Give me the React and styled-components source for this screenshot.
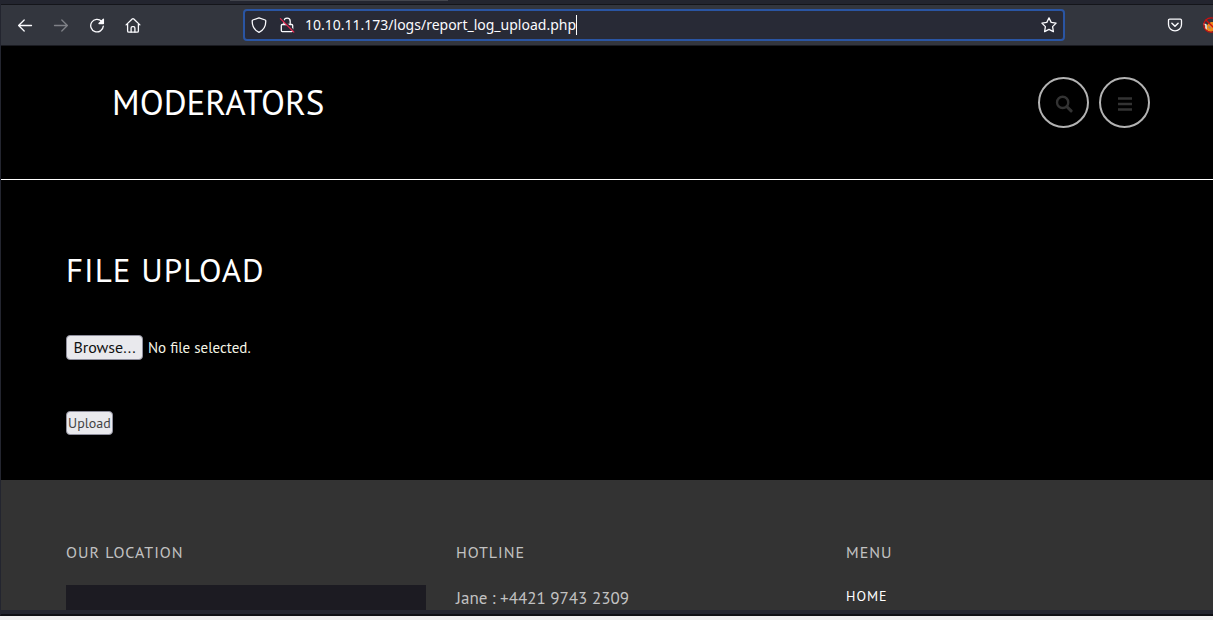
import React, { useRef, useState } from "react";
import styled, { createGlobalStyle } from "styled-components";

const GlobalStyle = createGlobalStyle`
  * {
    box-sizing: border-box;
  }
  body {
    margin: 0;
    background: #f0f0f0;
    font-family: "PT Sans", Lato, "Noto Sans", sans-serif;
  }
  button, input {
    font-family: inherit;
  }
`;

const Desktop = styled.div`
  display: flex;
  flex-direction: column;
  height: 100vh;
  padding-bottom: 4px;
`;

const BrowserWindow = styled.div`
  display: flex;
  flex-direction: column;
  flex: 1;
  min-height: 0;
  padding-bottom: 4px;
  overflow: hidden;
  background: #23252f;
  border-left: 1px solid #23252f;
  border-bottom: 2px solid #0e0f14;
`;

const TabStrip = styled.div`
  flex: none;
  height: 5px;
  padding-left: 229px;
  border-bottom: 1px solid #14151a;
`;

const TabEdge = styled.div`
  width: 218px;
  height: 1px;
  background: #43454d;
`;

const Toolbar = styled.div`
  display: flex;
  flex: none;
  align-items: center;
  justify-content: space-between;
  height: 41px;
  padding-left: 6px;
  background: #33363e;
  border-bottom: 1px solid #1a1b21;
`;

const ToolGroup = styled.div`
  display: flex;
  flex: none;
  overflow: hidden;
`;

const LeftTools = styled(ToolGroup)`
  width: 236px;
`;

const RightTools = styled(ToolGroup)`
  width: 148px;
  padding-left: 92px;
`;

const ToolButton = styled.button`
  display: flex;
  flex: none;
  align-items: center;
  justify-content: center;
  width: 36px;
  height: 32px;
  padding: 0;
  color: #fbfbfe;
  background: none;
  border: none;

  &:disabled {
    color: #7f8187;
  }
`;

const AddressBar = styled.div`
  display: flex;
  flex: 1;
  align-items: center;
  height: 32px;
  background: #282a36;
  border: 2px solid #2a55a3;
  border-radius: 4px;
`;

const AddressButton = styled(ToolButton)`
  width: 28px;
  height: 28px;
`;

const AddressInput = styled.input`
  field-sizing: content;
  margin-left: 4px;
  padding: 0;
  color: #fbfbfe;
  font-family: "Noto Sans", sans-serif;
  font-size: 14px;
  line-height: 20px;
  caret-color: transparent;
  background: none;
  border: none;
  outline: none;
`;

const Caret = styled.span`
  width: 1px;
  height: 20px;
  margin-right: auto;
  background: #ffffff;
`;

const Page = styled.div`
  display: flex;
  flex: 1;
  flex-direction: column;
  min-height: 0;
  overflow: hidden;
  background: #000000;
`;

const Header = styled.header`
  display: flex;
  flex: none;
  align-items: center;
  justify-content: space-between;
  padding: 31px 63px 51px 111px;
  border-bottom: 1px solid #ffffff;
`;

const Brand = styled.a`
  color: #ffffff;
  font-size: 35px;
  line-height: 51px;
  text-decoration: none;
`;

const HeaderActions = styled.nav`
  display: flex;
  gap: 10px;
`;

const RoundButton = styled.button`
  display: flex;
  align-items: center;
  justify-content: center;
  width: 51px;
  height: 51px;
  padding: 2px 0 0;
  color: #333333;
  background: none;
  border: 2px solid #b3b3b3;
  border-radius: 50%;
`;

const Main = styled.main`
  flex: none;
  padding: 70px 65px 45px;
`;

const Title = styled.h1`
  margin: 0 0 45px;
  color: #ffffff;
  font-size: 33px;
  font-weight: 400;
  line-height: 40px;
  letter-spacing: 1px;
  text-transform: uppercase;
`;

const FileRow = styled.div`
  display: flex;
  align-items: center;
  gap: 5px;
  margin-bottom: 51px;
  color: #f5f5e6;
  font-size: 15px;
`;

const GreyButton = styled.button`
  padding: 0 1px;
  color: #444444;
  font-size: 14px;
  line-height: 22px;
  background: #e9e9ed;
  border: 1px solid #8f8f9d;
  border-radius: 4px;
`;

const BrowseButton = styled(GreyButton)`
  min-width: 77px;
  padding: 0 5px;
  color: #111111;
  font-size: 16px;
  line-height: 23px;
`;

const Footer = styled.footer`
  display: grid;
  flex: 1 0 auto;
  grid-template-columns: repeat(3, 1fr);
  gap: 30px;
  padding: 62px 7px 0 65px;
  color: #c2c2c2;
  background: #333333;
`;

const FooterTitle = styled.h2`
  margin: 0 0 22px;
  font-size: 16px;
  font-weight: 400;
  line-height: 21px;
  letter-spacing: 1px;
  text-transform: uppercase;
`;

const MapBox = styled.div`
  height: 200px;
  background: #1c1b22;
`;

const Phone = styled.p`
  margin: 0;
  font-size: 17px;
  line-height: 26px;
`;

const MenuLink = styled.a`
  display: block;
  color: #ffffff;
  font-size: 14px;
  line-height: 22px;
  letter-spacing: 1px;
  text-decoration: none;
  text-transform: uppercase;
`;

const Icon = ({ size = 16, children }) => (
  <svg
    width={size}
    height={size}
    viewBox="0 0 16 16"
    fill="none"
    stroke="currentColor"
    strokeWidth="1.3"
    strokeLinecap="round"
    strokeLinejoin="round"
    aria-hidden="true"
  >
    {children}
  </svg>
);

const BackIcon = () => (
  <Icon>
    <path d="M14.5 8.5H1.6M7.2 3L1.6 8.5L7.2 14" />
  </Icon>
);

const ForwardIcon = () => (
  <Icon>
    <path d="M1.5 8.5H14.4M8.8 3L14.4 8.5L8.8 14" />
  </Icon>
);

const ReloadIcon = () => (
  <Icon>
    <path d="M12.6 4.3A6.3 6.3 0 1 0 14.3 9.1" />
    <path d="M14.4 2.1V6.5H10Z" fill="currentColor" />
  </Icon>
);

const HomeIcon = () => (
  <Icon>
    <path d="M1.1 7.9L7.2 2Q8 1.3 8.8 2L14.9 7.9M2.6 6.9V14Q2.6 15.2 4 15.2H12Q13.4 15.2 13.4 14V6.9" />
    <path d="M6.1 15V11Q6.1 9.6 7.4 9.6H8.6Q9.9 9.6 9.9 11V15" />
  </Icon>
);

const ShieldIcon = () => (
  <Icon>
    <path d="M8 .8L14.2 3Q14.8 3.2 14.8 4C14.8 9.5 12.4 13.3 8 15.3C3.6 13.3 1.2 9.5 1.2 4Q1.2 3.2 1.8 3Z" />
  </Icon>
);

const LockIcon = () => (
  <Icon>
    <path d="M5 7.5V4.2A3.1 3.1 0 0 1 11.2 4.2V7.5M3.3 7.5H12.7Q13.7 7.5 13.7 8.5V13.6Q13.7 14.6 12.7 14.6H3.3Q2.3 14.6 2.3 13.6V8.5Q2.3 7.5 3.3 7.5Z" />
    <path d="M2.4 1.2L15.4 14.2" stroke="#282a36" strokeWidth="1.6" />
    <path d="M1.4 1.6L14.8 15" stroke="#e2254d" strokeWidth="1.2" />
  </Icon>
);

const StarIcon = () => (
  <Icon>
    <path d="M8 .9L10.2 5.4L15.1 6.1L11.6 9.6L12.4 14.6L8 12.3L3.6 14.6L4.4 9.6L.9 6.1L5.8 5.4Z" />
  </Icon>
);

const PocketIcon = () => (
  <Icon>
    <path d="M2.7 2.2H13.3Q14.5 2.2 14.5 3.4V7.6A6.5 6.3 0 0 1 1.5 7.6V3.4Q1.5 2.2 2.7 2.2Z" />
    <path d="M4.9 6.2L8 9.2L11.1 6.2" strokeWidth="1.5" />
  </Icon>
);

const FoxIcon = () => (
  <Icon>
    <path
      d="M3 12C3 8 6 6 8 5L14 5V12L8 15L5 14Z"
      fill="#f08a1c"
      stroke="none"
    />
    <path d="M1 7L3 8L3 12" stroke="#f3eee2" strokeWidth="1.6" />
    <path d="M6 10L7 11" stroke="#8a8a88" strokeWidth="1.6" />
    <circle cx="8" cy="8" r="7.2" stroke="#cc1111" strokeWidth="1.3" />
    <path d="M3 3L13 13" stroke="#cc1111" strokeWidth="1.3" />
  </Icon>
);

const SearchIcon = () => (
  <Icon size={18}>
    <circle cx="6.8" cy="6.6" r="5" strokeWidth="2.1" />
    <path d="M10.6 10.4L14.3 14.1" strokeWidth="2.7" />
  </Icon>
);

const BarsIcon = () => (
  <Icon size={16}>
    <path d="M1 2.5H15M1 8H15M1 13.5H15" strokeWidth="2.6" strokeLinecap="butt" />
  </Icon>
);

const BrowserChrome = () => {
  const [url, setUrl] = useState("10.10.11.173/logs/report_log_upload.php");

  return (
    <>
      <TabStrip>
        <TabEdge />
      </TabStrip>
      <Toolbar>
        <LeftTools>
          <ToolButton aria-label="Back">
            <BackIcon />
          </ToolButton>
          <ToolButton aria-label="Forward" disabled>
            <ForwardIcon />
          </ToolButton>
          <ToolButton aria-label="Reload">
            <ReloadIcon />
          </ToolButton>
          <ToolButton aria-label="Home">
            <HomeIcon />
          </ToolButton>
        </LeftTools>
        <AddressBar>
          <AddressButton aria-label="Tracking protection">
            <ShieldIcon />
          </AddressButton>
          <AddressButton aria-label="Connection not secure">
            <LockIcon />
          </AddressButton>
          <AddressInput
            aria-label="Address"
            value={url}
            spellCheck={false}
            onChange={e => setUrl(e.target.value)}
          />
          <Caret />
          <AddressButton aria-label="Bookmark this page">
            <StarIcon />
          </AddressButton>
        </AddressBar>
        <RightTools>
          <ToolButton aria-label="Save to Pocket">
            <PocketIcon />
          </ToolButton>
          <ToolButton aria-label="Proxy">
            <FoxIcon />
          </ToolButton>
        </RightTools>
      </Toolbar>
    </>
  );
};

const UploadForm = () => {
  const fileInput = useRef(null);
  const [fileName, setFileName] = useState("");

  const handleChange = e => {
    const file = e.target.files[0];
    setFileName(file ? file.name : "");
  };

  return (
    <form onSubmit={e => e.preventDefault()}>
      <FileRow>
        <input
          ref={fileInput}
          type="file"
          aria-label="File"
          hidden
          onChange={handleChange}
        />
        <BrowseButton type="button" onClick={() => fileInput.current.click()}>
          Browse...
        </BrowseButton>
        <span>{fileName || "No file selected."}</span>
      </FileRow>
      <GreyButton type="submit">Upload</GreyButton>
    </form>
  );
};

const App = () => (
  <Desktop>
    <GlobalStyle />
    <BrowserWindow>
      <BrowserChrome />
      <Page>
        <Header>
          <Brand href="#">MODERATORS</Brand>
          <HeaderActions>
            <RoundButton aria-label="Search">
              <SearchIcon />
            </RoundButton>
            <RoundButton aria-label="Menu">
              <BarsIcon />
            </RoundButton>
          </HeaderActions>
        </Header>
        <Main>
          <Title>File Upload</Title>
          <UploadForm />
        </Main>
        <Footer>
          <section>
            <FooterTitle>Our Location</FooterTitle>
            <MapBox />
          </section>
          <section>
            <FooterTitle>Hotline</FooterTitle>
            <Phone>Jane : +4421 9743 2309</Phone>
          </section>
          <section>
            <FooterTitle>Menu</FooterTitle>
            <MenuLink href="#">Home</MenuLink>
          </section>
        </Footer>
      </Page>
    </BrowserWindow>
  </Desktop>
);

export default App;
